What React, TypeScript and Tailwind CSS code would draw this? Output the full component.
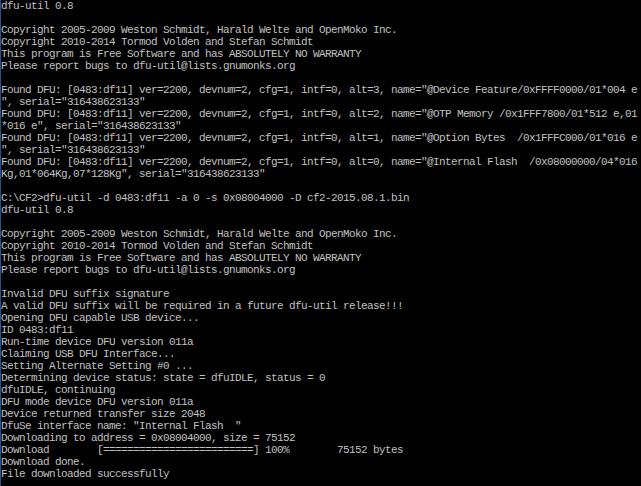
const lines = [
    'dfu-util 0.8',
    '',
    'Copyright 2005-2009 Weston Schmidt, Harald Welte and OpenMoko Inc.',
    'Copyright 2010-2014 Tormod Volden and Stefan Schmidt',
    'This program is Free Software and has ABSOLUTELY NO WARRANTY',
    'Please report bugs to dfu-util@lists.gnumonks.org',
    '',
    'Found DFU: [0483:df11] ver=2200, devnum=2, cfg=1, intf=0, alt=3, name="@Device Feature/0xFFFF0000/01*004 e',
    '", serial="316438623133"',
    'Found DFU: [0483:df11] ver=2200, devnum=2, cfg=1, intf=0, alt=2, name="@OTP Memory /0x1FFF7800/01*512 e,01',
    '*016 e", serial="316438623133"',
    'Found DFU: [0483:df11] ver=2200, devnum=2, cfg=1, intf=0, alt=1, name="@Option Bytes  /0x1FFFC000/01*016 e',
    '", serial="316438623133"',
    'Found DFU: [0483:df11] ver=2200, devnum=2, cfg=1, intf=0, alt=0, name="@Internal Flash  /0x08000000/04*016',
    'Kg,01*064Kg,07*128Kg", serial="316438623133"',
    '',
    'C:\\CF2>dfu-util -d 0483:df11 -a 0 -s 0x08004000 -D cf2-2015.08.1.bin',
    'dfu-util 0.8',
    '',
    'Copyright 2005-2009 Weston Schmidt, Harald Welte and OpenMoko Inc.',
    'Copyright 2010-2014 Tormod Volden and Stefan Schmidt',
    'This program is Free Software and has ABSOLUTELY NO WARRANTY',
    'Please report bugs to dfu-util@lists.gnumonks.org',
    '',
    'Invalid DFU suffix signature',
    'A valid DFU suffix will be required in a future dfu-util release!!!',
    'Opening DFU capable USB device...',
    'ID 0483:df11',
    'Run-time device DFU version 011a',
    'Claiming USB DFU Interface...',
    'Setting Alternate Setting #0 ...',
    'Determining device status: state = dfuIDLE, status = 0',
    'dfuIDLE, continuing',
    'DFU mode device DFU version 011a',
    'Device returned transfer size 2048',
    'DfuSe interface name: "Internal Flash  "',
    'Downloading to address = 0x08004000, size = 75152',
    'Download        [=========================] 100%        75152 bytes',
    'Download done.',
    'File downloaded successfully',
];

export default function App() {
    return (
        <div className="w-[641px] h-[486px] overflow-hidden bg-black border-l border-[#2c5282]">
            <div className="font-['Liberation_Mono',monospace] text-[11px] tracking-[-0.6px] leading-[12px] text-[#c0c0c0] whitespace-pre">
                {lines.map((line, i) => (
                    <div key={i} className="h-[12px]">{line}</div>
                ))}
            </div>
        </div>
    );
}
